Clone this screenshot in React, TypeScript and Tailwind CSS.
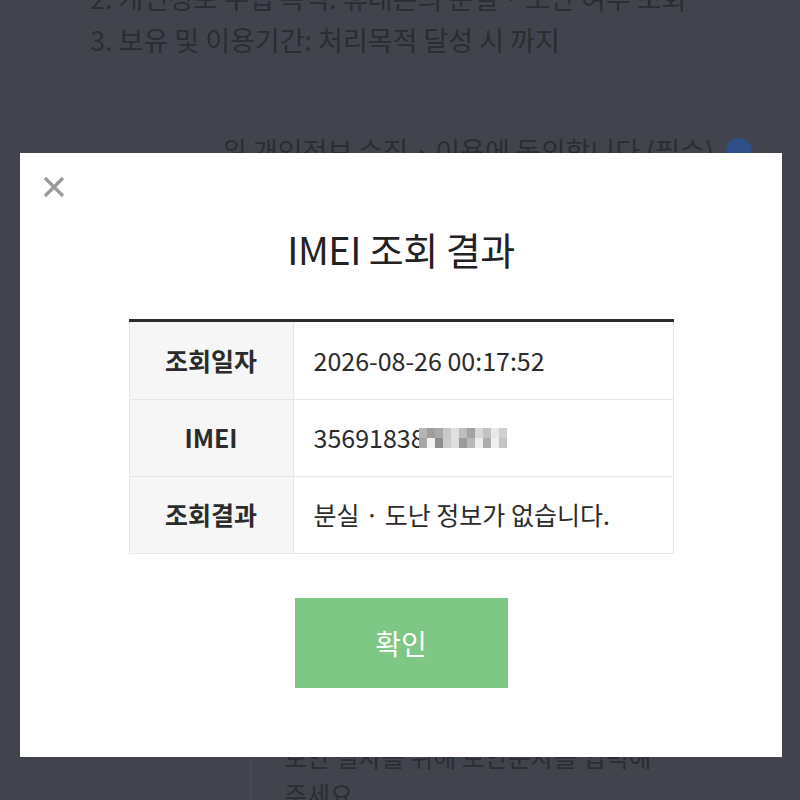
import React from 'react';

const rows = [
  { label: '조회일자', value: '2026-08-26 00:17:52' },
  { label: 'IMEI', value: '35691838' },
  { label: '조회결과', value: '분실 · 도난 정보가 없습니다.' },
];

// blurred tail of the IMEI number
const blur = [
  ['#b5b5b5', '#9e9e9e', '#a8a8a8', '#c9c9c9', '#e0e0e0', '#bdbdbd', '#a3a3a3', '#d9d9d9', '#c2c2c2', '#e8e8e8', '#cfcfcf'],
  ['#a6a6a6', '#f2f2f2', '#8f8f8f', '#cccccc', '#dedede', '#9b9b9b', '#b8b8b8', '#eeeeee', '#adadad', '#f0f0f0', '#c4c4c4'],
];

const Masked: React.FC = () => (
  <svg width="88" height="20" viewBox="0 0 88 20" className="ml-[-6px]">
    {blur.map((row, r) =>
      row.map((c, i) => <rect key={`${r}-${i}`} x={i * 8} y={r * 10} width="8" height="10" fill={c} />)
    )}
  </svg>
);

const App: React.FC = () => {
  return (
    <div className="relative h-[800px] w-[800px] overflow-hidden bg-[#41444c] font-['Noto_Sans_CJK_KR',sans-serif] text-[#292c32]">
      {/* page behind the dim layer */}
      <div className="-mt-[23px] pl-[90px] text-[27px] leading-[42px]">
        <p>2. 개인정보 수집 목적: 휴대폰의 분실 · 도난 여부 조회</p>
        <p>3. 보유 및 이용기간: 처리목적 달성 시 까지</p>
      </div>
      <div className="mt-[70px] flex items-center pl-[222px] text-[27px] leading-[40px]">
        <span>위 개인정보 수집 · 이용에 동의합니다 (필수)</span>
        <span className="ml-3 h-[26px] w-[26px] rounded-full bg-[#2f4f8a]" />
      </div>
      <div className="mt-[566px] ml-[250px] border-l border-[#4c4f57] pl-[33px] text-[25px] leading-[38px]">
        <p>보안 절차를 위해 보안문자를 입력해</p>
        <p>주세요</p>
      </div>

      {/* modal */}
      <div className="absolute left-[20px] top-[153px] h-[604px] w-[762px] bg-white">
        <button className="absolute left-[23px] top-[23px] flex h-[22px] w-[22px] items-center justify-center text-[#9a9a9a]">
          <svg width="22" height="22" viewBox="0 0 22 22" stroke="currentColor" strokeWidth="3.2" strokeLinecap="butt">
            <path d="M2 2 L20 20 M20 2 L2 20" />
          </svg>
        </button>
        <h2 className="pt-[71px] text-center text-[38px] leading-[50px] font-normal tracking-[-0.5px] text-[#222]">IMEI 조회 결과</h2>
        <div className="mx-auto mt-[45px] w-[545px] border-t-[3px] border-[#2b2b2b]">
          <table className="w-full border-collapse">
            <tbody>
              {rows.map((r, i) => (
                <tr key={r.label} className="h-[77px]">
                  <th className={`w-[164px] border border-[#e6e6e6] bg-[#f6f6f6] text-center text-[25px] font-bold text-[#2b2b2b] ${i === 0 ? 'border-t-0' : ''}`}>
                    {r.label}
                  </th>
                  <td className={`border border-[#e6e6e6] pl-[20px] text-left text-[25px] text-[#2b2b2b] ${i === 0 ? 'border-t-0' : ''}`}>
                    {i === 1 ? (
                      <span className="flex items-center">
                        <span>{r.value}</span>
                        <Masked />
                      </span>
                    ) : (
                      r.value
                    )}
                  </td>
                </tr>
              ))}
            </tbody>
          </table>
        </div>
        <div className="mt-[44px] flex justify-center">
          <button className="h-[90px] w-[213px] bg-[#7ec784] text-[28px] text-white">확인</button>
        </div>
      </div>
    </div>
  );
};

export default App;
